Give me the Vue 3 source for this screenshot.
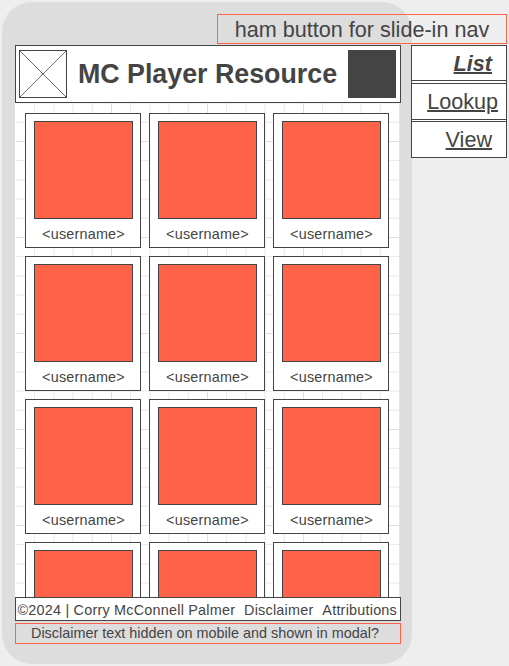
<script setup>
const cards = Array.from({ length: 12 }, (_, i) => ({ id: i, named: i < 9 }))
const links = ['List', 'Lookup', 'View']
</script>

<template>
  <div class="page">
    <main class="phone">
      <header class="header">
        <svg class="logo" width="48" height="48" viewBox="0 0 48 48">
          <rect x="0.5" y="0.5" width="47" height="47" fill="#fff" stroke="#444" />
          <path d="M1 1L47 47M47 1L1 47" stroke="#444" stroke-width="0.8" />
        </svg>
        <h1>MC Player Resource</h1>
        <div class="menu"></div>
      </header>
      <section class="content">
        <article v-for="card in cards" :key="card.id" class="card">
          <div class="avatar"></div>
          <span v-if="card.named">&lt;username&gt;</span>
        </article>
      </section>
      <footer class="footer">
        <span>©2024 | Corry McConnell Palmer</span>
        <span>Disclaimer</span>
        <span>Attributions</span>
      </footer>
      <p class="note">Disclaimer text hidden on mobile and shown in modal?</p>
    </main>
    <aside class="side">
      <p class="hint">ham button for slide-in nav</p>
      <nav class="nav">
        <a v-for="(link, i) in links" :key="link" :class="{ active: i === 0, wide: i === 1 }">{{ link }}</a>
      </nav>
    </aside>
  </div>
</template>

<style>
body {
  margin: 0;
  background: #eee;
}
</style>

<style scoped>
* {
  box-sizing: border-box;
}
.page {
  position: relative;
  width: 509px;
  height: 666px;
  padding: 2px;
  overflow: hidden;
  background: #eee;
  color: #444;
  font-family: "Liberation Sans", Arial, sans-serif;
}
.phone {
  width: 410px;
  height: 662px;
  padding: 43px 11px 20px 13px;
  border-radius: 30px;
  background: #ddd;
}
.header {
  display: flex;
  align-items: center;
  justify-content: space-between;
  height: 58px;
  padding: 0 4px 0 3px;
  border: 1px solid #444;
  background: #fff;
}
.logo {
  display: block;
}
h1 {
  margin: 0;
  font-size: 26.8px;
  line-height: 30px;
  white-space: nowrap;
}
.menu {
  width: 48px;
  height: 48px;
  background: #444;
}
.content {
  --lines: #dfdfdf 1px, transparent 1px 19px, #ebebeb 19px 20px, transparent 20px 38px,
    #f3f3f3 38px 40px, transparent 40px 57px, #f3f3f3 57px 59px, transparent 59px 76px,
    #f8f8f8 76px 77px, #ededed 77px 78px, transparent 78px;
  display: grid;
  grid-template-columns: repeat(3, 116px);
  grid-auto-rows: 135px;
  gap: 8px;
  width: 385px;
  height: 494px;
  padding: 10px 0 0 9px;
  overflow: hidden;
  border-right: 1px solid #e4e4e4;
  border-left: 1px solid #fff;
  background-color: #fff;
  background-image: linear-gradient(90deg, var(--lines)), linear-gradient(var(--lines));
  background-size: 96px 96px;
  background-position: -1px 38px;
}
.card {
  display: flex;
  flex-direction: column;
  align-items: center;
  padding: 7px 7px 0 8px;
  border: 1px solid #444;
  background: #fff;
  font-size: 14.4px;
  line-height: 16px;
  letter-spacing: 0.2px;
}
.card span {
  margin-top: 7px;
}
.avatar {
  flex: none;
  width: 99px;
  height: 98px;
  border: 1px solid #444;
  background: #ff6347;
}
.footer {
  display: flex;
  align-items: center;
  justify-content: space-between;
  height: 24px;
  padding: 1px 3px 0 1.5px;
  border: 1px solid #444;
  background: #fff;
  font-size: 14.4px;
  line-height: 16px;
  letter-spacing: 0.22px;
  white-space: nowrap;
}
.note {
  height: 21px;
  margin: 2px 0 0;
  padding-right: 6px;
  border: 1px solid #ff6347;
  font-size: 14.4px;
  line-height: 19px;
  text-align: center;
  white-space: nowrap;
}
.side {
  position: absolute;
  top: 14px;
  right: 2px;
  display: flex;
  flex-direction: column;
  align-items: flex-end;
  gap: 1px;
  font-size: 21.6px;
}
.hint {
  width: 290px;
  height: 30px;
  margin: 0;
  border: 1px solid #ff6347;
  line-height: 29px;
  text-align: center;
}
.nav {
  display: flex;
  flex-direction: column;
  width: 96px;
  height: 113px;
  border: 1px solid #444;
  background: #fff;
}
.nav a {
  height: 36px;
  padding-right: 14px;
  border-top: 1px solid #444;
  line-height: 36px;
  text-align: right;
  text-decoration: underline;
  text-decoration-thickness: 2px;
}
.nav a.wide {
  height: 37px;
  margin: 2px 0 1px;
  padding-right: 8px;
  border-bottom: 1px solid #444;
}
.nav a.active {
  height: 35px;
  border-top: 0;
  border-bottom: 1px solid #444;
  font-style: italic;
  font-weight: bold;
}
</style>
